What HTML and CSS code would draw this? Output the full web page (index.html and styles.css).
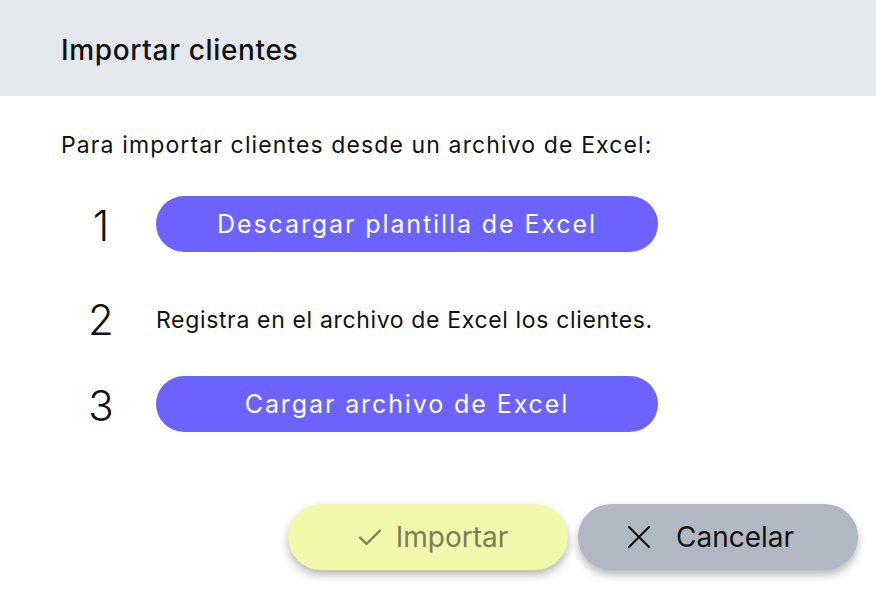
FILE: index.html
```html
<!DOCTYPE html>
<html lang="es">
<head>
<meta charset="utf-8">
<title>Importar clientes</title>
<link rel="stylesheet" href="styles.css">
</head>
<body>
<div class="dialog">
  <header class="dialog-header">
    <h1 class="dialog-title">Importar clientes</h1>
  </header>
  <main class="dialog-body">
    <p class="intro">Para importar clientes desde un archivo de Excel:</p>
    <div class="steps">
      <div class="step step-1">
        <span class="step-num">1</span>
        <button class="pill-btn" type="button">Descargar plantilla de Excel</button>
      </div>
      <div class="step step-2">
        <span class="step-num">2</span>
        <span class="step-text">Registra en el archivo de Excel los clientes.</span>
      </div>
      <div class="step step-3">
        <span class="step-num">3</span>
        <button class="pill-btn" type="button">Cargar archivo de Excel</button>
      </div>
    </div>
  </main>
  <footer class="dialog-footer">
    <button class="action-btn btn-import" type="button">
      <svg class="icon icon-check" width="24" height="24" viewBox="0 0 24 24" aria-hidden="true"><path d="M2 12.5l6.5 6.5L22 5.5" fill="none" stroke="currentColor" stroke-width="2.3" stroke-linecap="round" stroke-linejoin="round"/></svg>
      <span>Importar</span>
    </button>
    <button class="action-btn btn-cancel" type="button">
      <svg class="icon icon-x" width="24" height="24" viewBox="0 0 24 24" aria-hidden="true"><path d="M2 2L22 22M22 2L2 22" fill="none" stroke="currentColor" stroke-width="2.2" stroke-linecap="round"/></svg>
      <span>Cancelar</span>
    </button>
  </footer>
</div>
</body>
</html>
```

FILE: styles.css
```css
* { box-sizing: border-box; }

html, body {
  margin: 0;
  padding: 0;
  background: #ffffff;
}

body {
  font-family: "Inter", "Liberation Sans", sans-serif;
  color: #111111;
}

.dialog {
  width: 876px;
  height: 606px;
  display: flex;
  flex-direction: column;
}

.dialog-header {
  height: 96px;
  background: #e5e9ee;
  display: flex;
  align-items: center;
  padding: 0 61px;
}

.dialog-title {
  margin: 0;
  font-size: 28px;
  font-weight: 500;
  letter-spacing: 0.65px;
  color: #111;
  padding-top: 4px;
}

.dialog-body {
  padding: 0 61px;
}

.intro {
  margin: 35px 0 0;
  font-size: 23px;
  line-height: 28px;
  letter-spacing: 1.12px;
  color: #111;
}

.steps {
  display: flex;
  flex-direction: column;
  margin-top: 37px;
}

.step {
  display: grid;
  grid-template-columns: 80px 502px;
  column-gap: 15px;
  align-items: center;
  height: 56px;
}

.step-2 { margin-top: 40px; }
.step-3 { margin-top: 28px; }

.step-num {
  text-align: center;
  font-size: 42px;
  font-weight: 300;
  line-height: 1;
  color: #111;
}

.step-1 .step-num { padding-top: 3px; }
.step-2 .step-num { padding-top: 0; }
.step-3 .step-num { padding-top: 3px; }

.step-text {
  font-size: 23px;
  letter-spacing: 0.65px;
  color: #111;
}

.pill-btn {
  height: 56px;
  width: 502px;
  border: none;
  border-radius: 28px;
  background: #6c63ff;
  color: #ffffff;
  font-family: "Inter", "Liberation Sans", sans-serif;
  font-size: 25px;
  font-weight: 400;
  letter-spacing: 1.9px;
  padding: 0;
  cursor: pointer;
}

.dialog-footer {
  display: flex;
  justify-content: flex-end;
  gap: 10px;
  padding: 0 18px;
  margin-top: 72px;
}

.action-btn {
  width: 280px;
  height: 66px;
  border: none;
  border-radius: 33px;
  display: flex;
  align-items: center;
  justify-content: center;
  font-family: "Inter", "Liberation Sans", sans-serif;
  font-size: 28px;
  font-weight: 400;
  box-shadow: 0 5px 8px rgba(0, 0, 0, 0.28);
  cursor: pointer;
}

.btn-import {
  background: #f3f9aa;
  color: #7b7d58;
  gap: 14px;
  padding: 0 0 0 10px;
}

.btn-cancel {
  background: #b2b8c3;
  color: #111111;
  gap: 25px;
  padding: 0 15px 0 0;
}

.icon { display: block; flex: none; }
```
